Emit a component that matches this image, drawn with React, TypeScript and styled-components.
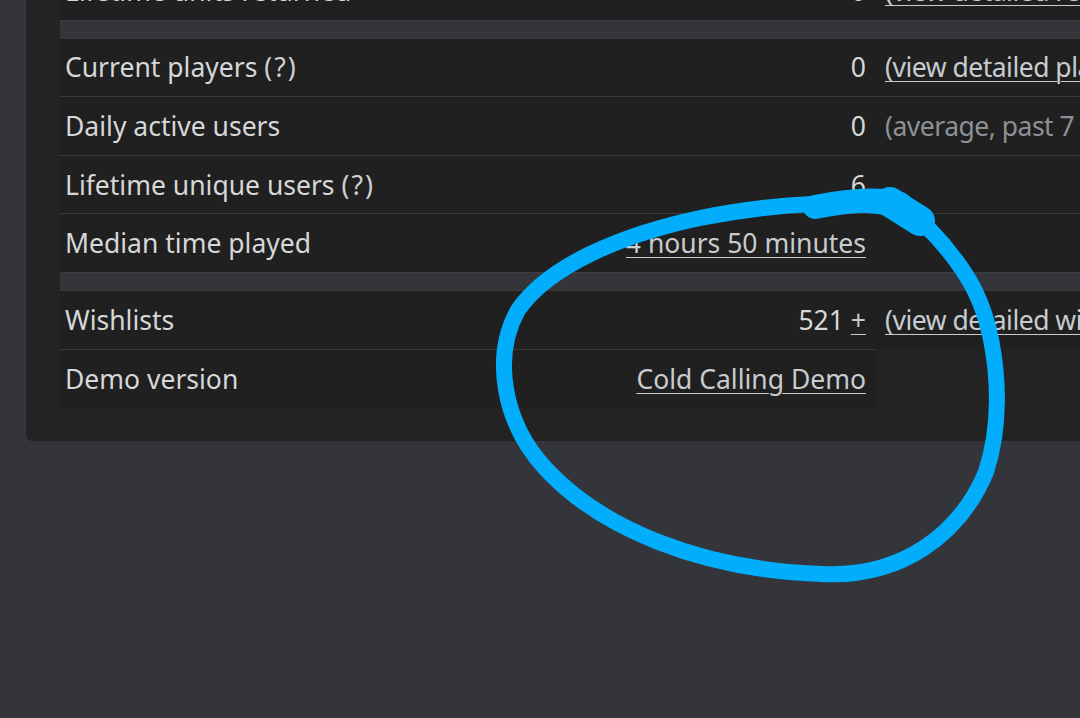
import styled, { createGlobalStyle } from 'styled-components';

const GlobalStyle = createGlobalStyle`
  html, body {
    margin: 0;
    padding: 0;
    background: #33353b;
    overflow: hidden;
  }

  body {
    font-family: 'Noto Sans', 'Open Sans', sans-serif;
  }
`;

const Page = styled.div`
  position: relative;
  width: 1080px;
  height: 718px;
  overflow: hidden;
  padding-left: 26px;
  box-sizing: border-box;
`;

const Panel = styled.section`
  width: 1200px;
  margin-top: -39px;
  padding: 0 0 33px 34px;
  background: #232323;
  border-radius: 0 0 0 6px;
`;

const Table = styled.table`
  width: 1166px;
  border-collapse: collapse;
  table-layout: fixed;
  font-size: 26.5px;
  color: #d6d7d8;
`;

const Row = styled.tr`
  height: 58.6px;
`;

const Spacer = styled.tr`
  height: 18px;

  td {
    background: #34353a;
    border-top: 1px solid #3e3f43;
    padding: 0;
  }
`;

const Cell = styled.td`
  padding: 0 5px;
  background: #202020;
  border-top: 1px solid #3a3a3b;
  white-space: nowrap;
  overflow: hidden;
`;

const Label = styled(Cell)`
  width: 490px;
  text-align: left;
`;

const Value = styled(Cell)`
  width: 301px;
  padding-right: 9px;
  text-align: right;
`;

const Extra = styled(Cell)<{ $muted?: boolean }>`
  padding-left: 10px;
  letter-spacing: -0.5px;
  color: ${({ $muted }) => ($muted ? '#8d9196' : '#c7ccd1')};
`;

const Link = styled.a`
  color: #c7ccd1;
  text-decoration: underline;
  text-decoration-thickness: 1px;
  text-underline-offset: 4px;
`;

const Hint = styled.span`
  color: #cfd1d3;
  letter-spacing: 2px;
`;

const Overlay = styled.svg`
  position: absolute;
  top: 0;
  left: 0;
  pointer-events: none;
`;

const Scribble = () => (
  <Overlay width={1080} height={718} viewBox="0 0 1080 718">
    <g fill="none" stroke="#02aefc" strokeLinecap="round" strokeLinejoin="round">
      <path
        strokeWidth={16}
        d="M 915 214 C 860 196, 770 204, 700 218 C 625 234, 550 264, 518 310 C 492 357, 503 422, 545 468 C 600 528, 700 570, 822 574 C 902 578, 960 534, 986 472 C 1006 410, 998 322, 964 272 C 948 248, 930 226, 902 206"
      />
      <path strokeWidth={24} d="M 815 207 C 850 200, 880 198, 900 204" />
      <path strokeWidth={30} d="M 890 202 L 920 221" />
    </g>
  </Overlay>
);

const App = () => {
  return (
    <>
      <GlobalStyle />
      <Page>
        <Panel>
          <Table>
            <tbody>
              <Row>
                <Label>Lifetime units returned</Label>
                <Value>0</Value>
                <Extra>
                  <Link>(view detailed returns data)</Link>
                </Extra>
              </Row>
              <Spacer>
                <td colSpan={3} />
              </Spacer>
              <Row>
                <Label>
                  Current players <Hint>(?)</Hint>
                </Label>
                <Value>0</Value>
                <Extra>
                  <Link>(view detailed player data)</Link>
                </Extra>
              </Row>
              <Row>
                <Label>Daily active users</Label>
                <Value>0</Value>
                <Extra $muted>(average, past 7 days)</Extra>
              </Row>
              <Row>
                <Label>
                  Lifetime unique users <Hint>(?)</Hint>
                </Label>
                <Value>6</Value>
                <Extra />
              </Row>
              <Row>
                <Label>Median time played</Label>
                <Value>
                  <Link>4 hours 50 minutes</Link>
                </Value>
                <Extra />
              </Row>
              <Spacer>
                <td colSpan={3} />
              </Spacer>
              <Row>
                <Label>Wishlists</Label>
                <Value>
                  521 <Link>+</Link>
                </Value>
                <Extra>
                  <Link>(view detailed wishlist data)</Link>
                </Extra>
              </Row>
              <Row>
                <Label>Demo version</Label>
                <Value>
                  <Link>Cold Calling Demo</Link>
                </Value>
              </Row>
            </tbody>
          </Table>
        </Panel>
        <Scribble />
      </Page>
    </>
  );
};

export default App;
